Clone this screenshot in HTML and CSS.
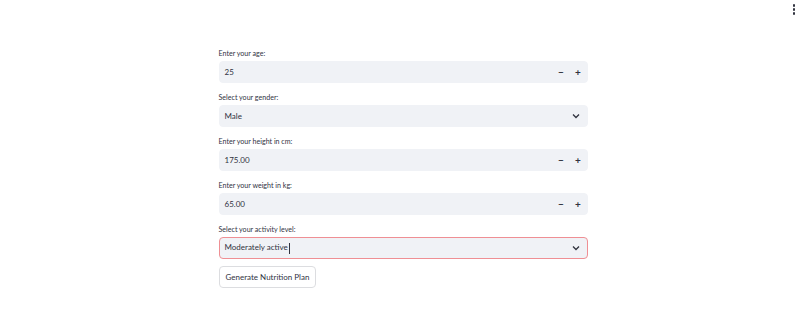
FILE: index.html
```html
<!DOCTYPE html>
<html lang="en">
<head>
	<meta charset="UTF-8">
	<title>Nutrition Plan</title>
	<link rel="stylesheet" href="styles.css">
</head>
<body>
	<div class="topbar">
		<div class="menu">
			<span class="dot"></span>
			<span class="dot"></span>
			<span class="dot"></span>
		</div>
	</div>
	<div class="main">
		<div class="field">
			<label class="label">Enter your age:</label>
			<div class="input">
				<span class="value">25</span>
				<div class="steps">
					<span class="step">&minus;</span>
					<span class="step">+</span>
				</div>
			</div>
		</div>
		<div class="field">
			<label class="label">Select your gender:</label>
			<div class="input">
				<span class="value">Male</span>
				<svg class="chev" width="8" height="6" viewBox="0 0 8 6"><path d="M1 1.5 L4 4.5 L7 1.5" fill="none" stroke="#31333f" stroke-width="1.3"/></svg>
			</div>
		</div>
		<div class="field">
			<label class="label">Enter your height in cm:</label>
			<div class="input">
				<span class="value">175.00</span>
				<div class="steps">
					<span class="step">&minus;</span>
					<span class="step">+</span>
				</div>
			</div>
		</div>
		<div class="field">
			<label class="label">Enter your weight in kg:</label>
			<div class="input">
				<span class="value">65.00</span>
				<div class="steps">
					<span class="step">&minus;</span>
					<span class="step">+</span>
				</div>
			</div>
		</div>
		<div class="field">
			<label class="label">Select your activity level:</label>
			<div class="input focus">
				<span class="value">Moderately active<span class="caret"></span></span>
				<svg class="chev" width="8" height="6" viewBox="0 0 8 6"><path d="M1 1.5 L4 4.5 L7 1.5" fill="none" stroke="#31333f" stroke-width="1.3"/></svg>
			</div>
		</div>
		<div class="btnrow">
			<button class="btn">Generate Nutrition Plan</button>
		</div>
	</div>
</body>
</html>
```
FILE: styles.css
```css
body{
	margin: 0;
	background: #fff;
	font-family: Lato, "Noto Sans", sans-serif;
	color: #31333f;
}
.topbar{
	height: 40px;
	display: flex;
	justify-content: flex-end;
}
.menu{
	display: flex;
	flex-direction: column;
	gap: 1.5px;
	padding: 4px 11px 0 0;
}
.dot{
	width: 2.5px;
	height: 2.5px;
	border-radius: 50%;
	background: #31333f;
}
.main{
	width: 369px;
	margin: 0 auto;
	padding-top: 7px;
}
.field{
	margin-bottom: 8px;
}
.label{
	display: block;
	height: 14px;
	line-height: 13px;
	font-size: 7.1px;
}
.input{
	height: 22px;
	box-sizing: border-box;
	background: #f0f2f6;
	border: 1px solid #f0f2f6;
	border-radius: 4px;
	display: flex;
	align-items: center;
	justify-content: space-between;
	padding-left: 5px;
	font-size: 8px;
}
.input.focus{
	border-color: #ef8f94;
}
.caret{
	display: inline-block;
	width: 1px;
	height: 11px;
	background: #31333f;
	vertical-align: middle;
	margin-left: 1px;
}
.chev{
	margin-right: 7px;
}
.steps{
	display: flex;
	height: 100%;
}
.step{
	width: 17px;
	display: flex;
	align-items: center;
	justify-content: center;
	font-size: 10px;
	font-weight: bold;
	color: #31333f;
}
.btnrow{
	margin-top: -3px;
}
.btn{
	height: 22px;
	padding: 0 6px;
	background: #fff;
	border: 1px solid #dcdde0;
	border-radius: 4px;
	font-family: Lato, "Noto Sans", sans-serif;
	font-size: 8px;
	color: #31333f;
}
```
